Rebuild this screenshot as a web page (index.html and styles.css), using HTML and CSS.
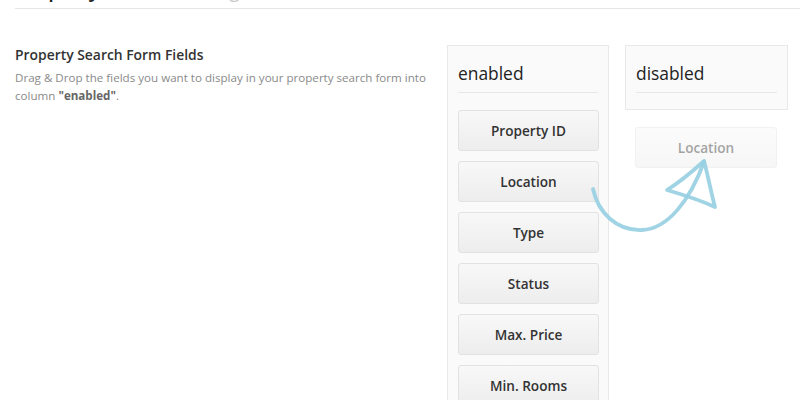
FILE: index.html
```html
<!DOCTYPE html>
<html>
<head>
<meta charset="utf-8">
<link rel="stylesheet" href="styles.css">
</head>
<body>
<header class="top">
  <h1>Property Search <span class="muted">Settings</span></h1>
</header>
<main class="content">
  <section class="intro">
    <h3 class="intro-title">Property Search Form Fields</h3>
    <p class="intro-text">Drag &amp; Drop the fields you want to display in your property search form into column <strong>"enabled"</strong>.</p>
  </section>
  <section class="col col-enabled">
    <h2 class="col-title">enabled</h2>
    <ul class="fields">
      <li class="field">Property ID</li>
      <li class="field">Location</li>
      <li class="field">Type</li>
      <li class="field">Status</li>
      <li class="field">Max. Price</li>
      <li class="field">Min. Rooms</li>
    </ul>
  </section>
  <section class="disabled-wrap">
    <div class="col col-disabled">
      <h2 class="col-title">disabled</h2>
    </div>
    <div class="field ghost">Location</div>
  </section>
</main>
<svg class="arrow" width="800" height="400" viewBox="0 0 800 400">
  <path d="M593,189 C598,212 616,231 642,230 C668,229 690,200 704,162" />
  <path d="M704,161 C694,170 680,182 667,190 C684,195 700,200 715,207 C711,192 708,176 704,161" />
</svg>
</body>
</html>
```
FILE: styles.css
```css
* { box-sizing: border-box; }
html, body { margin: 0; padding: 0; }
body {
  width: 800px;
  height: 400px;
  overflow: hidden;
  background: #ffffff;
  font-family: "Open Sans", "Noto Sans", sans-serif;
  color: #333;
  position: relative;
}
.top {
  margin: 0 0 0 15px;
  padding-bottom: 6px;
  border-bottom: 1px solid #e6e6e6;
}
.top h1 {
  margin: -22px 0 0 0;
  font-size: 20px;
  line-height: 24px;
  font-weight: 600;
  color: #222;
}
.top .muted { color: #ccc; font-weight: 400; }

.content {
  display: flex;
  align-items: flex-start;
  padding: 36px 12px 0 15px;
}
.intro {
  width: 432px;
  flex: none;
  padding-right: 2px;
}
.intro-title {
  margin: 0;
  padding-top: 1px;
  font-size: 13.9px;
  line-height: 18px;
  font-weight: 600;
  color: #333;
}
.intro-text {
  margin: 5px 0 0;
  font-size: 11.6px;
  line-height: 18px;
  color: #8a8a8a;
}
.intro-text strong { color: #666; font-weight: 700; }

.col {
  width: 162px;
  flex: none;
  border: 1px solid #e8e8e8;
  background: #fafafa;
  padding: 0 10px;
}
.col-enabled { height: 420px; }
.col-disabled { padding-bottom: 16px; }
.col-title {
  margin: 0;
  padding: 15px 0 7px;
  font-size: 17.4px;
  line-height: 24px;
  font-weight: 400;
  color: #222;
  border-bottom: 1px solid #e8e8e8;
}
.fields {
  list-style: none;
  margin: 17px 0 0;
  padding: 0;
  display: flex;
  flex-direction: column;
  gap: 10px;
}
.field {
  width: 141px;
  height: 41px;
  display: flex;
  align-items: center;
  justify-content: center;
  border: 1px solid #e2e2e2;
  border-radius: 3px;
  background: linear-gradient(#f8f8f8, #ededed);
  font-size: 13.6px;
  font-weight: 600;
  color: #333;
}
.disabled-wrap {
  margin-left: 16px;
  width: 163px;
  flex: none;
}
.disabled-wrap .col { width: 163px; }
.ghost {
  margin: 17px 0 0 10px;
  width: 142px;
  height: 41px;
  opacity: 0.45;
}
.arrow {
  position: absolute;
  left: 0;
  top: 0;
  pointer-events: none;
}
.arrow path {
  fill: none;
  stroke: #96cfe2;
  stroke-width: 3.8;
  stroke-linecap: round;
  stroke-linejoin: round;
  opacity: 0.9;
}
```
